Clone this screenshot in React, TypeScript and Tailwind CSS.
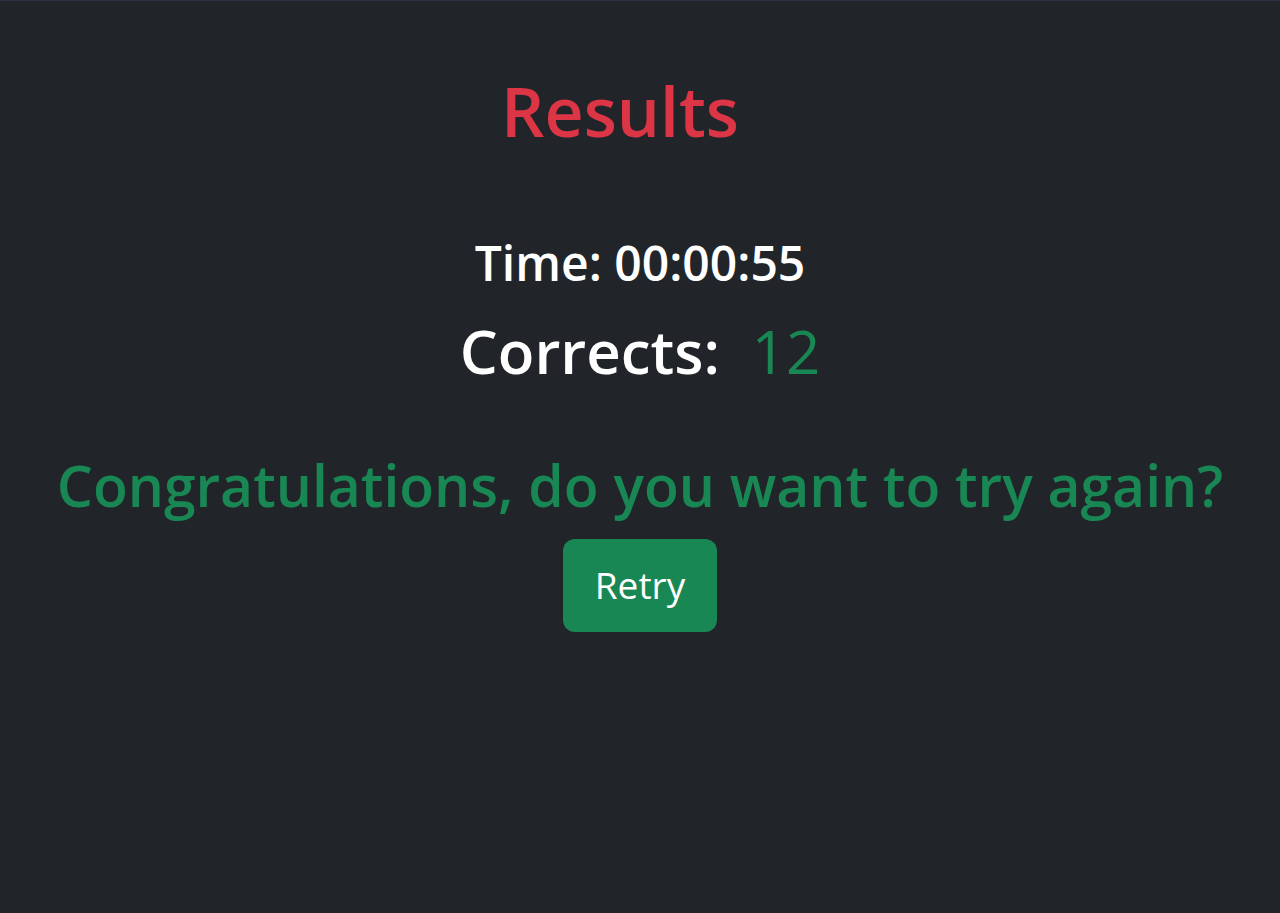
import React from 'react';

const font = { fontFamily: '"Open Sans", "Noto Sans", sans-serif' };

export default function App() {
    const time = '00:00:55';
    const corrects = 12;

    return (
        <div style={font} className="min-h-[913px] bg-[#212529] border-t border-[#2f3242] flex flex-col items-center text-white">
            {/* Title */}
            <h1 className="mt-[69px] pr-[40px] text-[68px] leading-[1.2] font-semibold text-[#dc3545]">Results</h1>

            {/* Stats */}
            <h2 className="mt-[82px] text-[48px] leading-[1.2] font-semibold">Time: {time}</h2>
            <h2 className="mt-[24px] text-[60px] leading-[1.2] font-semibold">
                Corrects: <span className="ml-[16px] font-normal text-[#198754]">{corrects}</span>
            </h2>

            {/* Message */}
            <h2 className="mt-[64px] text-[57px] leading-[1.2] font-semibold text-[#198754]">
                Congratulations, do you want to try again?
            </h2>
            <button className="mt-[19px] w-[154px] h-[93px] rounded-[12px] bg-[#198754] text-[37px] text-white">
                Retry
            </button>
        </div>
    );
}
